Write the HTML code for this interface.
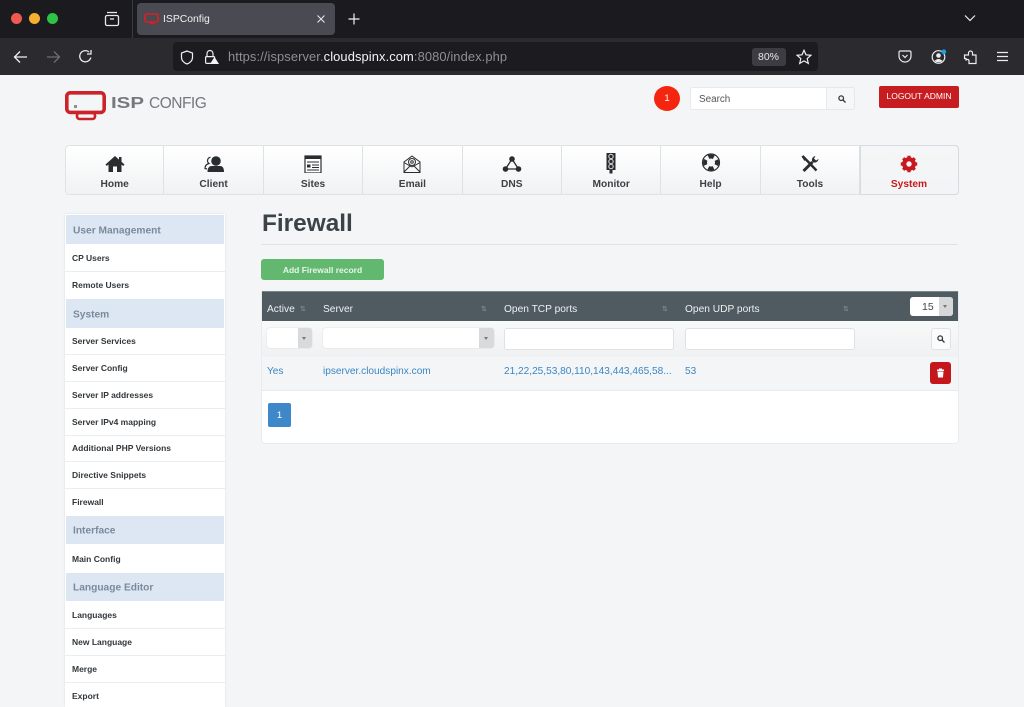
<!DOCTYPE html>
<html><head><meta charset="utf-8"><title>ISPConfig</title>
<style>
*{box-sizing:border-box;margin:0;padding:0}
html,body{width:1024px;height:707px;overflow:hidden;background:#f3f5f7;font-family:"Liberation Sans",sans-serif}
.a{position:absolute}
.t{position:absolute;white-space:nowrap;line-height:1}
#tabbar{left:0;top:0;width:1024px;height:38px;background:#1b1b1f}
#navbar{left:0;top:38px;width:1024px;height:37px;background:#2b2a2f}
.dot{position:absolute;width:11px;height:11px;border-radius:50%;top:13px}
#side{left:65px;top:214px;width:160px;height:493px;background:#fff;box-shadow:0 0 2px rgba(0,0,0,.12)}
.sh{position:absolute;left:66px;width:158px;background:#dde7f3}
.sh span{position:absolute;left:7px;top:calc(50% + 1px);transform:translateY(-50%);font-size:10.2px;font-weight:bold;color:#7a8a9c;white-space:nowrap}
.si{position:absolute;left:7px;font-size:8.5px;font-weight:bold;color:#32373b;white-space:nowrap;line-height:1}
.ln{position:absolute;left:0;width:160px;height:1px;background:#ebeef0}
.nav{position:absolute;top:146px;height:48px;width:99.4px;border-right:1px solid #dfe2e4;background:linear-gradient(#fff,#f0f2f3)}
.nav b{position:absolute;left:0;right:0;top:34px;text-align:center;font-size:10.2px;color:#3c4144;line-height:1}
.nav svg{position:absolute;left:50%;top:9px;transform:translateX(-50%)}
.th{position:absolute;top:305px;font-size:10.2px;color:#eef1f2;white-space:nowrap;line-height:1}
.so{position:absolute;top:306px;font-size:7px;color:#8b979d;line-height:1}
.td{position:absolute;top:367px;font-size:10.1px;color:#3b86c4;white-space:nowrap;line-height:1}
.inp{position:absolute;top:328px;height:22px;background:#fff;border:1px solid #dfe2e4;border-radius:3px}
</style></head><body>
<div class="a" id="tabbar"></div>
<div class="a" id="navbar"></div>
<div class="dot" style="left:11px;background:#ef5a50"></div>
<div class="dot" style="left:29px;background:#f5b02e"></div>
<div class="dot" style="left:47px;background:#2ec246"></div>
<svg class="a" style="left:104px;top:11px" width="16" height="16" viewBox="0 0 16 16" fill="none" stroke="#e8e8ea" stroke-width="1.3"><path d="M3 1.5H13"/><rect x="1.5" y="4.5" width="13" height="10" rx="1.5"/><path d="M6 8H10"/></svg>
<div class="a" style="left:132px;top:0;width:1px;height:38px;background:#3a3a40"></div>
<div class="a" style="left:137px;top:3px;width:198px;height:32px;background:#4a4a52;border-radius:4px"></div>
<svg class="a" style="left:144px;top:13px" width="15" height="12" viewBox="0 0 15 12" fill="none" stroke="#c8242a" stroke-width="1.8"><rect x="1" y="1" width="13" height="8" rx="1.5"/><path d="M6 10.5H11"/></svg>
<div class="t" style="left:163px;top:15px;font-size:10.4px;color:#f0f0f2">ISPConfig</div>
<svg class="a" style="left:316px;top:14px" width="10" height="10" viewBox="0 0 10 10" stroke="#e4e4e6" stroke-width="1.1"><path d="M1.5 1.5L8.5 8.5M8.5 1.5L1.5 8.5"/></svg>
<svg class="a" style="left:348px;top:13px" width="12" height="12" viewBox="0 0 12 12" stroke="#f2f2f4" stroke-width="1.2"><path d="M6 .5V11.5M.5 6H11.5"/></svg>
<svg class="a" style="left:964px;top:14px" width="12" height="8" viewBox="0 0 12 8" fill="none" stroke="#eee" stroke-width="1.2"><path d="M1 1.5L6 6.5L11 1.5"/></svg>

<svg class="a" style="left:13px;top:50px" width="15" height="14" viewBox="0 0 15 14" fill="none" stroke="#f0f0f2" stroke-width="1.3"><path d="M14 7H2M7 1.5L1.5 7L7 12.5"/></svg>
<svg class="a" style="left:46px;top:50px" width="15" height="14" viewBox="0 0 15 14" fill="none" stroke="#6f6e73" stroke-width="1.3"><path d="M1 7H13M8 1.5L13.5 7L8 12.5"/></svg>
<svg class="a" style="left:78px;top:49px" width="15" height="15" viewBox="0 0 15 15" fill="none" stroke="#ececee" stroke-width="1.3"><path d="M12.8 8.5A5.6 5.6 0 1 1 11 3"/><path d="M13 1V5H9" /></svg>
<div class="a" style="left:173px;top:42px;width:645px;height:29px;background:#1c1b20;border-radius:4px"></div>
<svg class="a" style="left:180px;top:50px" width="14" height="15" viewBox="0 0 14 15" fill="none" stroke="#f0f0f2" stroke-width="1.2"><path d="M7 1L1.5 3V7.5C1.5 10.5 4 13 7 14C10 13 12.5 10.5 12.5 7.5V3Z"/></svg>
<svg class="a" style="left:204px;top:49px" width="15" height="16" viewBox="0 0 15 16"><path d="M3 8V4.5A3 3 0 0 1 9 4.5V8" fill="none" stroke="#eee" stroke-width="1.2"/><rect x="1.6" y="7.6" width="9" height="6.8" rx="1" fill="none" stroke="#eee" stroke-width="1.2"/><path d="M10.5 8L15 15H6Z" fill="#f4f4f4"/></svg>
<div class="t" style="left:228px;top:51px;font-size:12.9px;color:#8f8f94;letter-spacing:.1px">https://ispserver.<span style="color:#f4f4f6">cloudspinx.com</span>:8080/index.php</div>
<div class="a" style="left:752px;top:48px;width:34px;height:18px;background:#3d3c43;border-radius:3px"></div>
<div class="t" style="left:758px;top:52px;font-size:10.5px;color:#e6e6e8">80%</div>
<svg class="a" style="left:796px;top:49px" width="16" height="16" viewBox="0 0 16 16" fill="none" stroke="#f0f0f2" stroke-width="1.2"><path d="M8 1.3L10 5.8L14.9 6.3L11.2 9.6L12.3 14.4L8 11.9L3.7 14.4L4.8 9.6L1.1 6.3L6 5.8Z"/></svg>
<svg class="a" style="left:898px;top:50px" width="14" height="13" viewBox="0 0 14 13" fill="none" stroke="#ececee" stroke-width="1.2"><path d="M1 2.5Q1 1 2.5 1H11.5Q13 1 13 2.5V6A6 6 0 0 1 1 6Z"/><path d="M4.5 5L7 7.5L9.5 5"/></svg>
<svg class="a" style="left:931px;top:49px" width="16" height="16" viewBox="0 0 16 16"><circle cx="7.5" cy="8" r="6.3" fill="none" stroke="#ececee" stroke-width="1.2"/><circle cx="7.5" cy="6.5" r="2.3" fill="#ececee"/><path d="M3.5 12Q7.5 8 11.5 12Q7.5 14.5 3.5 12Z" fill="#ececee"/><circle cx="12.8" cy="2.8" r="2.4" fill="#1a9fe0"/></svg>
<svg class="a" style="left:963px;top:49px" width="15" height="16" viewBox="0 0 15 16" fill="none" stroke="#ececee" stroke-width="1.2"><path d="M1.5 6H5.5V4A2 2 0 0 1 9.5 4V6H13V14.5H6V12.5A1.5 1.5 0 0 0 3 11.5V9.5H1.5Z"/></svg>
<svg class="a" style="left:996px;top:51px" width="13" height="11" viewBox="0 0 13 11" stroke="#ececee" stroke-width="1.2"><path d="M1 1.5H12M1 5.5H12M1 9.5H12"/></svg>

<svg class="a" style="left:64px;top:90px" width="44" height="31" viewBox="0 0 44 31" fill="none"><rect x="2.8" y="2.8" width="37.4" height="19.6" rx="3.5" stroke="#cc2229" stroke-width="3.6"/><rect x="13" y="23" width="18" height="6" rx="2.5" stroke="#cc2229" stroke-width="2.6"/><rect x="10" y="15" width="3" height="3" fill="#8d9194"/></svg>
<div class="t" style="left:111px;top:96px;font-size:15.5px;font-weight:bold;color:#74797d;transform:scaleX(1.32);transform-origin:left">ISP</div>
<div class="t" style="left:149px;top:96px;font-size:15.5px;color:#74797d;letter-spacing:-.5px">CONFIG</div>

<div class="a" style="left:654px;top:86px;width:26px;height:25px;border-radius:50%;background:#f5260f"></div>
<div class="t" style="left:654px;top:94px;width:26px;text-align:center;font-size:9.5px;color:#fff">1</div>
<div class="a" style="left:690px;top:87px;width:137px;height:23px;background:#fff;border:1px solid #e7e9eb;border-radius:3px 0 0 3px"></div>
<div class="t" style="left:699px;top:95px;font-size:9.9px;color:#555">Search</div>
<div class="a" style="left:827px;top:87px;width:28px;height:23px;background:#f6f7f8;border:1px solid #e5e7e9;border-left:0;border-radius:0 3px 3px 0"></div>
<svg class="a" style="left:838px;top:95px" width="8" height="8" viewBox="0 0 8 8" fill="none" stroke="#33383b" stroke-width="1.3"><circle cx="3.2" cy="3.2" r="2.3"/><path d="M5 5L7.5 7.5"/></svg>
<div class="a" style="left:879px;top:86px;width:80px;height:22px;background:#c71d21;border-radius:2px"></div>
<div class="t" style="left:879px;top:92px;width:80px;text-align:center;font-size:8.5px;color:#fff">LOGOUT ADMIN</div>

<div class="a" style="left:65px;top:145px;width:894px;height:50px;border:1px solid #e0e3e5;border-radius:4px;background:#fff"></div>
<div class="nav" style="left:66px;width:98.4px;border-radius:4px 0 0 4px"><svg width="20" height="18" viewBox="0 0 20 18"><path d="M10 1L0.5 9.5L1.8 11L3.5 9.5V17H8V11.5H12V17H16.5V9.5L18.2 11L19.5 9.5L16.5 6.8V2H14V4.6Z" fill="#2a2d30"/></svg><b>Home</b></div>
<div class="nav" style="left:164.4px"><svg width="20" height="18" viewBox="0 0 20 18"><circle cx="12" cy="6" r="4.8" fill="#2a2d30"/><path d="M3.5 17Q3.5 11 8 11H16Q20 11 20 17Z" fill="#2a2d30"/><path d="M6.5 2.2A3.5 3.5 0 0 0 5 8.5Q1 9.5 1 13.5L3 14" fill="none" stroke="#2a2d30" stroke-width="1.2"/></svg><b>Client</b></div>
<div class="nav" style="left:263.8px"><svg width="18" height="18" viewBox="0 0 18 18"><rect x="1" y="1" width="16" height="17" fill="#fff" stroke="#2a2d30" stroke-width="1.2"/><rect x="1" y="1" width="16" height="3" fill="#2a2d30"/><path d="M3 7H15M8 10H15M8 12.5H15M3 15H15" stroke="#2a2d30" stroke-width="1"/><rect x="3" y="9.5" width="3.5" height="3" fill="#2a2d30"/></svg><b>Sites</b></div>
<div class="nav" style="left:363.2px"><svg width="18" height="18" viewBox="0 0 18 18" fill="none" stroke="#2a2d30" stroke-width="1"><path d="M1 7L9 1L17 7V17.5H1Z"/><path d="M1 17L7 11M17 17L11 11M1 7.5L7 11Q9 12.5 11 11L17 7.5"/><circle cx="9" cy="7" r="3.5"/><circle cx="9" cy="7" r="1.3"/></svg><b>Email</b></div>
<div class="nav" style="left:462.6px"><svg width="20" height="18" viewBox="0 0 20 18"><path d="M10 4L3.5 14H16.5Z" fill="none" stroke="#2a2d30" stroke-width="1.3"/><circle cx="10" cy="4" r="2.8" fill="#2a2d30"/><circle cx="3.5" cy="14" r="2.8" fill="#2a2d30"/><circle cx="16.5" cy="14" r="2.8" fill="#2a2d30"/></svg><b>DNS</b></div>
<div class="nav" style="left:562px"><svg width="12" height="22" viewBox="0 0 12 22" style="top:6px"><path d="M1.5 1H10.5V18H7.5V21.5H4.5V18H1.5Z" fill="#2a2d30"/><circle cx="6" cy="4.5" r="2.2" fill="none" stroke="#dfe2e4" stroke-width="1"/><circle cx="6" cy="9.5" r="2.2" fill="none" stroke="#dfe2e4" stroke-width="1"/><circle cx="6" cy="14.5" r="2.2" fill="none" stroke="#dfe2e4" stroke-width="1"/></svg><b>Monitor</b></div>
<div class="nav" style="left:661.4px"><svg width="19" height="19" viewBox="0 0 19 19" style="top:7px"><circle cx="9.5" cy="9.5" r="8.5" fill="#f6f7f8" stroke="#2a2d30" stroke-width="1.2"/><circle cx="9.5" cy="9.5" r="6" fill="none" stroke="#2a2d30" stroke-width="4" stroke-dasharray="5.4 4.02" stroke-dashoffset="2.7"/></svg><b>Help</b></div>
<div class="nav" style="left:760.8px"><svg width="19" height="18" viewBox="0 0 19 18"><path d="M2 1L5 4L16 15.5" stroke="#2a2d30" stroke-width="2.4" fill="none"/><path d="M1 1.5L3 .5L6 4L4 6Z" fill="#2a2d30"/><path d="M3 16L12 7" stroke="#2a2d30" stroke-width="3"/><path d="M12 7A4 4 0 0 1 15 1L13.5 3.5L15.5 5.5L18 4A4 4 0 0 1 12 7Z" fill="#2a2d30"/></svg><b>Tools</b></div>
<div class="a" style="left:860px;top:145px;width:99px;height:50px;border:1px solid #d8dbdd;border-radius:0 4px 4px 0;background:linear-gradient(#f5f6f7,#f3f4f5)"></div>
<div class="nav" style="left:860px;width:98px;border:0;background:none"><svg width="18" height="18" viewBox="0 0 18 18"><circle cx="9" cy="9" r="4.8" fill="none" stroke="#c8191e" stroke-width="4.2"/><path d="M9 .8V17.2M.8 9H17.2M3.2 3.2L14.8 14.8M14.8 3.2L3.2 14.8" stroke="#c8191e" stroke-width="3.2" stroke-dasharray="3.4 9.6"/></svg><b style="color:#c8191e">System</b></div>

<div class="a" id="side"></div>
<div class="sh" style="top:215px;height:29px"><span>User Management</span></div>
<div class="sh" style="top:299px;height:29px"><span>System</span></div>
<div class="sh" style="top:516px;height:28px"><span>Interface</span></div>
<div class="sh" style="top:573px;height:28px"><span>Language Editor</span></div>
<div class="ln" style="left:65px;top:271px"></div><div class="ln" style="left:65px;top:354px"></div><div class="ln" style="left:65px;top:381px"></div><div class="ln" style="left:65px;top:408px"></div><div class="ln" style="left:65px;top:435px"></div><div class="ln" style="left:65px;top:461px"></div><div class="ln" style="left:65px;top:488px"></div><div class="ln" style="left:65px;top:628px"></div><div class="ln" style="left:65px;top:655px"></div><div class="ln" style="left:65px;top:682px"></div>
<div class="si" style="left:72px;top:254px">CP Users</div>
<div class="si" style="left:72px;top:281px">Remote Users</div>
<div class="si" style="left:72px;top:337px">Server Services</div>
<div class="si" style="left:72px;top:364px">Server Config</div>
<div class="si" style="left:72px;top:391px">Server IP addresses</div>
<div class="si" style="left:72px;top:418px">Server IPv4 mapping</div>
<div class="si" style="left:72px;top:444px">Additional PHP Versions</div>
<div class="si" style="left:72px;top:471px">Directive Snippets</div>
<div class="si" style="left:72px;top:498px">Firewall</div>
<div class="si" style="left:72px;top:555px">Main Config</div>
<div class="si" style="left:72px;top:611px">Languages</div>
<div class="si" style="left:72px;top:638px">New Language</div>
<div class="si" style="left:72px;top:665px">Merge</div>
<div class="si" style="left:72px;top:692px">Export</div>

<div class="t" style="left:262px;top:212px;font-size:24.4px;font-weight:bold;color:#3c4347">Firewall</div>
<div class="a" style="left:261px;top:244px;width:697px;height:1px;background:#e0e3e6"></div>
<div class="a" style="left:261px;top:259px;width:123px;height:21px;background:#62b86e;border-radius:3px"></div>
<div class="t" style="left:261px;top:266px;width:123px;text-align:center;font-size:8.5px;font-weight:bold;color:#e8f5ea">Add Firewall record</div>

<div class="a" style="left:261px;top:291px;width:698px;height:153px;background:#fff;border:1px solid #e9ecee;border-radius:0 0 4px 4px"></div>
<div class="a" style="left:262px;top:291px;width:696px;height:30px;background:#4f5a61;border-top:1px solid #7a858b"></div>
<div class="th" style="left:267px">Active</div><div class="so" style="left:300px">⇅</div>
<div class="th" style="left:323px">Server</div><div class="so" style="left:481px">⇅</div>
<div class="th" style="left:504px">Open TCP ports</div><div class="so" style="left:662px">⇅</div>
<div class="th" style="left:685px">Open UDP ports</div><div class="so" style="left:843px">⇅</div>
<div class="a" style="left:910px;top:297px;width:43px;height:19px;background:#fff;border-radius:3px"></div>
<div class="a" style="left:939px;top:297px;width:14px;height:19px;background:#d5d7d9;border-radius:0 3px 3px 0"></div>
<div class="t" style="left:922px;top:302px;font-size:10.5px;color:#444">15</div>
<div class="a" style="left:943px;top:305px;border:2.5px solid transparent;border-top:3px solid #777;border-bottom:0"></div>

<div class="a" style="left:262px;top:321px;width:696px;height:36px;background:linear-gradient(#f8f9f9,#eff1f2)"></div>
<div class="a" style="left:262px;top:357px;width:696px;height:34px;background:#f3f5f6;border-bottom:1px solid #e9ecee"></div>
<div class="inp" style="left:267px;top:328px;width:45px;height:20px;border:0;box-shadow:0 0 1px #bbb"></div>
<div class="a" style="left:298px;top:328px;width:14px;height:20px;background:#d8dadc;border-radius:0 3px 3px 0"></div>
<div class="a" style="left:302px;top:337px;border:2.5px solid transparent;border-top:3px solid #777;border-bottom:0"></div>
<div class="inp" style="left:323px;top:328px;width:171px;height:20px;border:0;box-shadow:0 0 1px #bbb"></div>
<div class="a" style="left:479px;top:328px;width:15px;height:20px;background:#d8dadc;border-radius:0 3px 3px 0"></div>
<div class="a" style="left:484px;top:337px;border:2.5px solid transparent;border-top:3px solid #777;border-bottom:0"></div>
<div class="inp" style="left:504px;width:170px"></div>
<div class="inp" style="left:685px;width:170px"></div>
<div class="a" style="left:931px;top:328px;width:20px;height:22px;background:#fbfbfc;border:1px solid #dfe2e4;border-radius:3px"></div>
<svg class="a" style="left:937px;top:335px" width="8" height="8" viewBox="0 0 8 8" fill="none" stroke="#33383b" stroke-width="1.3"><circle cx="3.2" cy="3.2" r="2.3"/><path d="M5 5L7.5 7.5"/></svg>
<div class="td" style="left:267px">Yes</div>
<div class="td" style="left:323px">ipserver.cloudspinx.com</div>
<div class="td" style="left:504px">21,22,25,53,80,110,143,443,465,58...</div>
<div class="td" style="left:685px">53</div>
<div class="a" style="left:930px;top:362px;width:21px;height:22px;background:#c4161b;border-radius:3px"></div>
<svg class="a" style="left:936px;top:368px" width="9" height="10" viewBox="0 0 9 10" fill="#fff"><path d="M1 1.5H3V.5H6V1.5H8V3H1ZM1.5 3.5H7.5L7 9.5H2Z"/></svg>
<div class="a" style="left:268px;top:403px;width:23px;height:24px;background:#3e88c9;border-radius:2px"></div>
<div class="t" style="left:268px;top:411px;width:23px;text-align:center;font-size:9.5px;color:#fff">1</div>
</body></html>
